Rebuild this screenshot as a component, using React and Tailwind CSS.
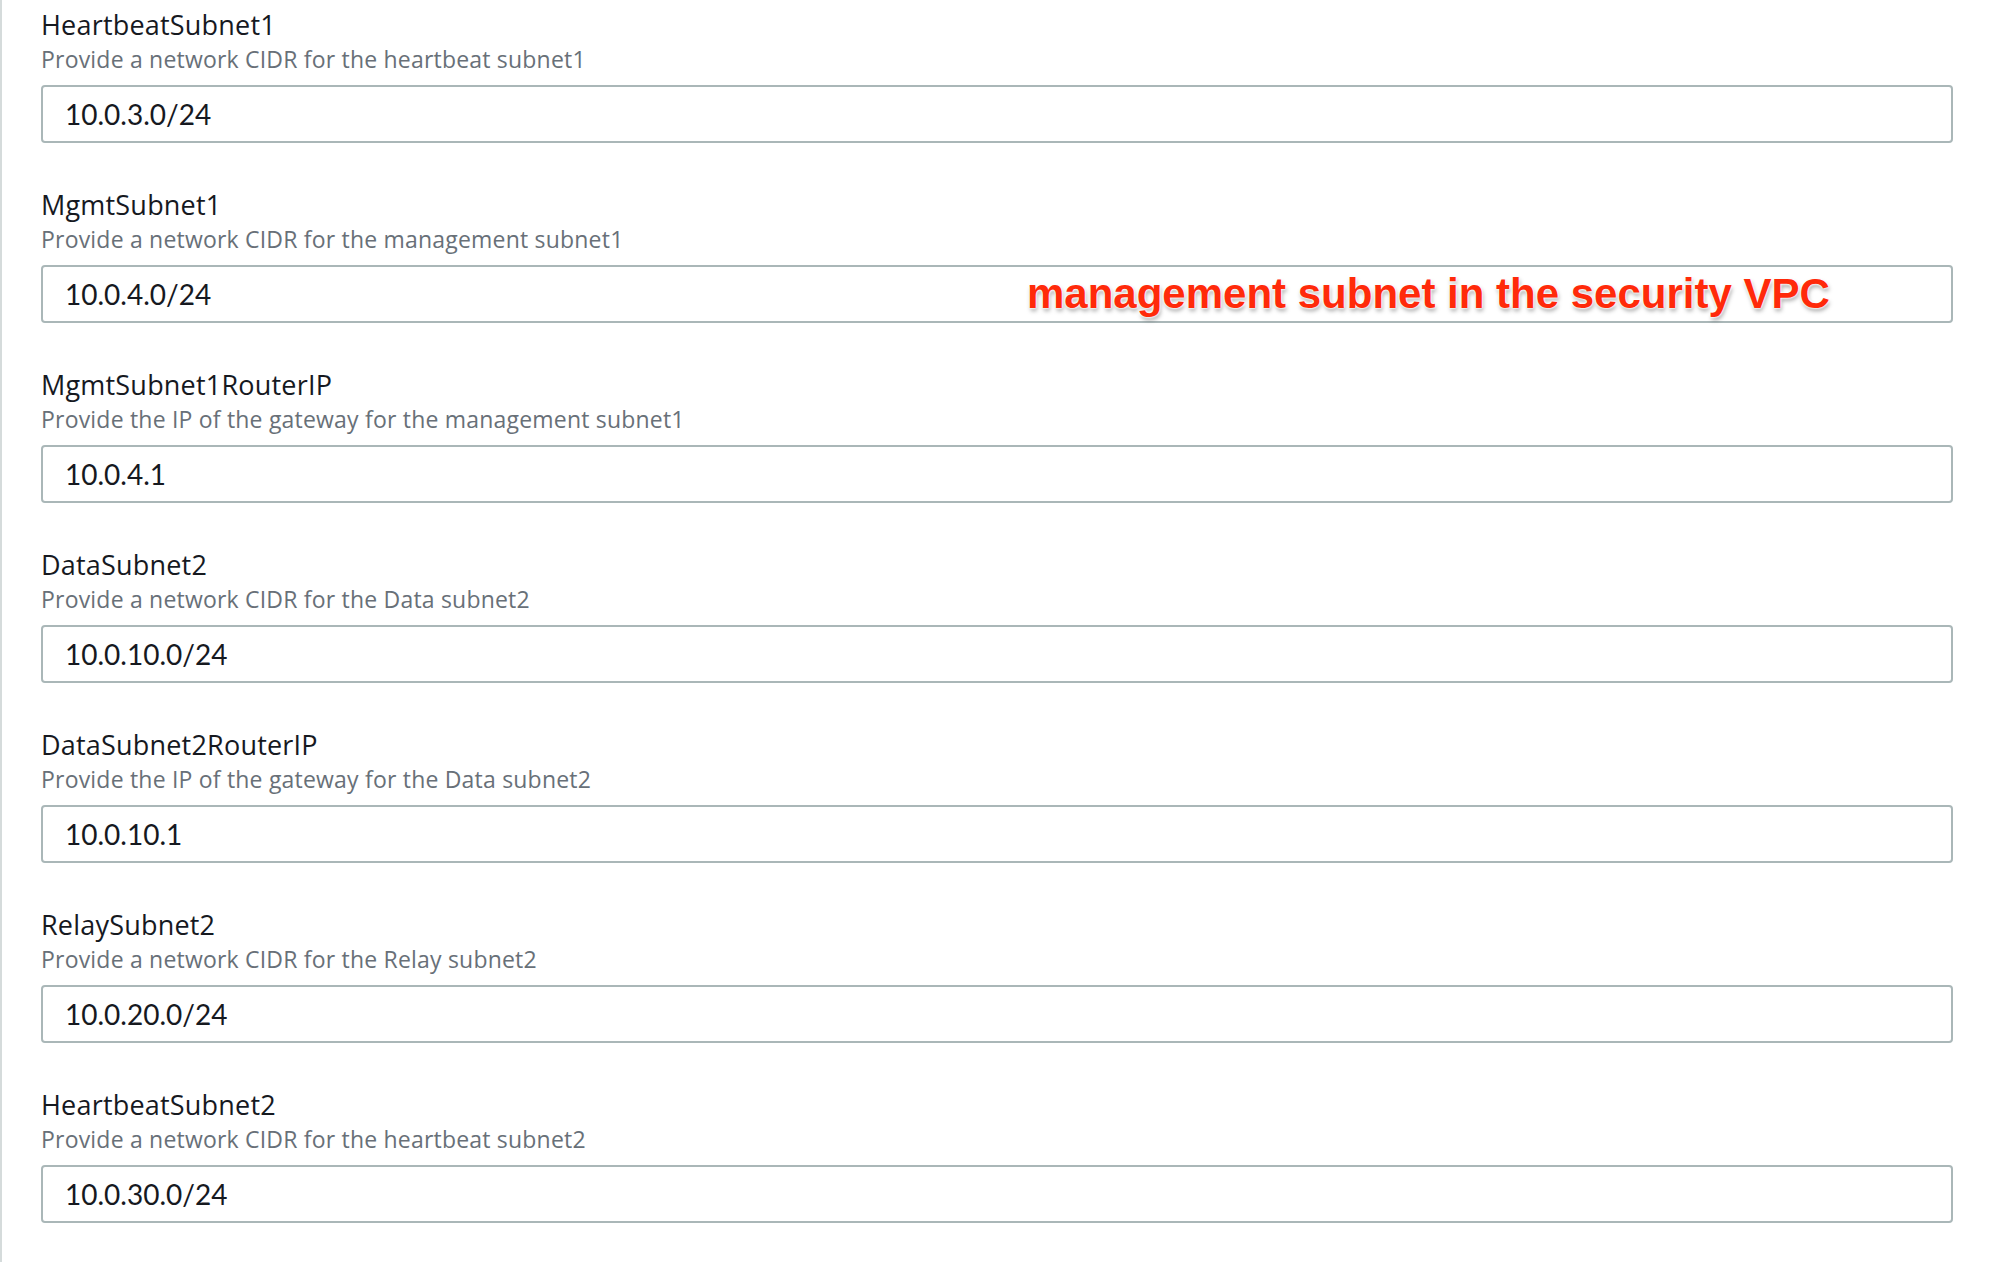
import React from 'react';

const fields = [
    { name: 'HeartbeatSubnet1', hint: 'Provide a network CIDR for the heartbeat subnet1', value: '10.0.3.0/24' },
    { name: 'MgmtSubnet1', hint: 'Provide a network CIDR for the management subnet1', value: '10.0.4.0/24', note: 'management subnet in the security VPC' },
    { name: 'MgmtSubnet1RouterIP', hint: 'Provide the IP of the gateway for the management subnet1', value: '10.0.4.1' },
    { name: 'DataSubnet2', hint: 'Provide a network CIDR for the Data subnet2', value: '10.0.10.0/24' },
    { name: 'DataSubnet2RouterIP', hint: 'Provide the IP of the gateway for the Data subnet2', value: '10.0.10.1' },
    { name: 'RelaySubnet2', hint: 'Provide a network CIDR for the Relay subnet2', value: '10.0.20.0/24' },
    { name: 'HeartbeatSubnet2', hint: 'Provide a network CIDR for the heartbeat subnet2', value: '10.0.30.0/24' },
];

const Field = ({ field }) => {
    const { name, hint, value, note } = field;

    return (
        <div className="flex flex-col">
            <label className="text-[27px] leading-[32px] tracking-[0.2px] text-[#16191f] [font-family:'Open_Sans',sans-serif]">{name}</label>
            <p className="mt-[3px] text-[23px] leading-[30px] tracking-[0.2px] text-[#687078] [font-family:'Open_Sans',sans-serif]">{hint}</p>

            <div className="relative mt-[11px] h-[58px] flex items-center rounded-[4px] border-2 border-[#aab7b8] bg-white px-[22px]">
                <span className="text-[28px] leading-[34px] text-[#16191f]">{value}</span>
                {note && (
                    <span
                        className="absolute left-[984px] top-[6px] whitespace-nowrap text-[42px] leading-[42px] font-bold text-[#ff2a0a] [font-family:'Liberation_Sans',Arial,sans-serif] [text-shadow:0_0_2px_#fff,0_0_2px_#fff,0_0_3px_#fff,1px_3px_4px_rgba(0,0,0,0.35)]"
                    >
                        {note}
                    </span>
                )}
            </div>
        </div>
    );
};

export default function App() {
    return (
        <div className="min-h-[1262px] w-full bg-white [font-family:Lato,'Noto_Sans',sans-serif]">
            <div className="min-h-[1262px] border-l-2 border-[#d5dbdb] pl-[39px] pr-[41px] pt-[9px]">
                <div className="flex flex-col gap-[46px]">
                    {fields.map(field => (
                        <Field key={field.name} field={field} />
                    ))}
                </div>
            </div>
        </div>
    );
}
